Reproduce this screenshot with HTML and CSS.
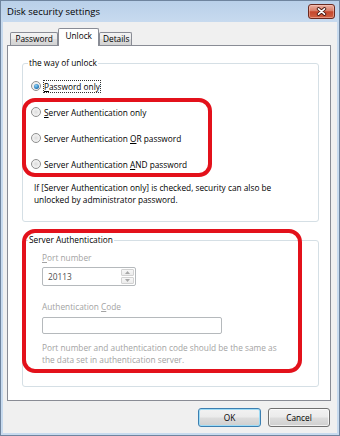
FILE: index.html
```html
<!DOCTYPE html>
<html lang="en">
<head>
<meta charset="utf-8">
<title>Disk security settings</title>
<link rel="stylesheet" href="styles.css">
</head>
<body>
<div class="window">
  <div class="titlebar">
    <span class="title">Disk security settings</span>
    <div class="close">
      <svg width="11" height="9" viewBox="0 0 11 9">
        <path d="M2.5 1.8 L8.5 7.2 M8.5 1.8 L2.5 7.2" stroke="#4a1a12" stroke-width="3.4" stroke-linecap="round" fill="none"/>
        <path d="M2.5 1.8 L8.5 7.2 M8.5 1.8 L2.5 7.2" stroke="#ffffff" stroke-width="1.6" stroke-linecap="round" fill="none"/>
      </svg>
    </div>
  </div>
  <div class="client">
    <div class="tabs">
      <div class="tab">Password</div>
      <div class="tab active">Unlock</div>
      <div class="tab last">Details</div>
    </div>
    <div class="panel">
      <fieldset class="group g1">
        <legend>the way of unlock</legend>
        <div class="g1-body">
          <div class="radios">
            <div class="radio"><span class="dot checked"></span><span class="rtext focus"><u>P</u>assword only</span></div>
            <div class="radio"><span class="dot"></span><span class="rtext"><u>S</u>erver Authentication only</span></div>
            <div class="radio"><span class="dot"></span><span class="rtext">Server Authentication <u>O</u>R password</span></div>
            <div class="radio"><span class="dot"></span><span class="rtext">Server Authentication <u>A</u>ND password</span></div>
          </div>
          <p class="hint">If [Server Authentication only] is checked, security can also be<br>unlocked by administrator password.</p>
        </div>
      </fieldset>
      <fieldset class="group g2">
        <legend>Server Authentication</legend>
        <div class="g2-body">
          <div class="flabel"><u>P</u>ort number</div>
          <div class="spin">
            <span class="spin-val">20113</span>
            <span class="spin-btns">
              <span class="sbtn"><svg width="5" height="3" viewBox="0 0 5 3"><path d="M0 3 L2.5 0 L5 3 Z" fill="#a8a8a8"/></svg></span>
              <span class="sbtn"><svg width="5" height="3" viewBox="0 0 5 3"><path d="M0 0 L2.5 3 L5 0 Z" fill="#a8a8a8"/></svg></span>
            </span>
          </div>
          <div class="flabel gap">Authentication <u>C</u>ode</div>
          <div class="textbox"></div>
          <p class="note">Port number and authentication code should be the same as<br>the data set in authentication server.</p>
        </div>
      </fieldset>
      <div class="mark m1"></div>
      <div class="mark m2"></div>
    </div>
    <div class="buttons">
      <div class="btn default">OK</div>
      <div class="btn">Cancel</div>
    </div>
  </div>
</div>
</body>
</html>
```
FILE: styles.css
```css
* { box-sizing: border-box; }
html, body { margin: 0; padding: 0; }
body {
  width: 340px;
  height: 436px;
  overflow: hidden;
  font-family: "Open Sans", "Noto Sans", sans-serif;
  font-size: 8.3px;
  line-height: 12px;
  color: #000;
  background: #c7daee;
}
.window {
  width: 340px;
  height: 436px;
  display: flex;
  flex-direction: column;
  background: linear-gradient(#b9d0e9, #c8dbef 22px, #c8dbef);
  border: 1px solid #6f849e;
}
.titlebar {
  height: 21px;
  display: flex;
  justify-content: space-between;
  align-items: flex-start;
  padding-left: 6px;
}
.title {
  font-size: 9.5px;
  line-height: 12px;
  margin-top: 5px;
  color: #000;
}
.close {
  width: 27px;
  height: 15px;
  margin: 3px 4px 0 0;
  border: 1px solid #6b2a20;
  border-radius: 3px;
  background: linear-gradient(#eab0a3, #d97e68 45%, #c5462c 52%, #d06244 100%);
  box-shadow: inset 0 0 0 1px rgba(255, 210, 200, 0.45);
  display: flex;
  align-items: center;
  justify-content: center;
}
.client {
  flex: 1;
  margin: 0 2px 2px 2px;
  background: #f0f0f0;
  display: flex;
  flex-direction: column;
  padding: 6px 0 6px 0;
}
.tabs {
  display: flex;
  align-items: flex-end;
  margin-left: 7px;
  height: 17px;
  position: relative;
  z-index: 1;
}
.tab {
  height: 13px;
  padding: 0 4.5px;
  border: 1px solid #898c95;
  border-bottom: none;
  border-radius: 2px 2px 0 0;
  background: linear-gradient(#f3f3f3, #ebebeb 50%, #dedede 50%, #d3d3d3);
  line-height: 11px;
}
.tab.active {
  height: 18px;
  margin-bottom: -1px;
  padding: 1px 6px 0 6px;
  background: #fff;
  line-height: 12px;
}
.tab.last { padding: 0 2px 0 3px; }
.panel {
  flex: 1;
  margin: 0 6px 0 4px;
  background: #fff;
  border: 1px solid #898c95;
  position: relative;
  display: flex;
  flex-direction: column;
  padding: 0 11px 0 14px;
}
.group {
  margin: 0;
  padding: 0;
  border: 1px solid #d5dfe5;
  border-radius: 3px;
  min-width: 0;
}
.group legend {
  margin-left: 5px;
  padding: 0 1px;
  line-height: 12px;
}
.g1 { margin-top: 11px; }
.g2 { margin-top: 12px; }
.g1-body { padding: 10px 8px 15px 8px; }
.radios {
  display: flex;
  flex-direction: column;
  gap: 12px;
}
.radio {
  display: flex;
  align-items: center;
  height: 14px;
}
.dot {
  width: 10px;
  height: 10px;
  border-radius: 50%;
  border: 1px solid #8e8f8f;
  background: radial-gradient(circle at 50% 50%, #dcdcdc 0, #eeeeee 50%, #fafafa 100%);
  margin-right: 2px;
  flex: none;
  display: flex;
  align-items: center;
  justify-content: center;
}
.dot.checked::after {
  content: "";
  width: 5px;
  height: 5px;
  border-radius: 50%;
  background: radial-gradient(circle at 40% 35%, #8fd2f5 0, #2a7fbf 60%, #174f86 100%);
}
.rtext {
  border: 1px solid transparent;
  padding: 0;
  line-height: 11px;
}
.rtext.focus { border: 1px dotted #333; }
u { text-underline-offset: 1px; }
.hint {
  margin: 11px 0 0 3px;
}
.g2-body { padding: 6px 8px 20px 19px; }
.flabel { color: #a3a3a3; }
.flabel.gap { margin-top: 15px; }
.spin {
  margin-top: 3px;
  width: 94px;
  height: 19px;
  border: 1px solid #b5b9bc;
  border-radius: 2px;
  background: #fff;
  display: flex;
  align-items: center;
  padding-left: 5px;
}
.spin-val { color: #4d4d4d; }
.spin-btns {
  margin-left: auto;
  display: flex;
  flex-direction: column;
  gap: 1px;
  padding: 1px 1px 1px 0;
  height: 100%;
}
.sbtn {
  width: 13px;
  flex: 1;
  border: 1px solid #d2d2d2;
  border-radius: 1px;
  background: linear-gradient(#f7f7f7, #ececec);
  display: flex;
  align-items: center;
  justify-content: center;
}
.textbox {
  margin-top: 4px;
  width: 180px;
  height: 17px;
  border: 1px solid #b5b9bc;
  border-radius: 2px;
  background: #fff;
}
.note {
  margin: 8px 0 0 0;
  color: #a3a3a3;
}
.mark {
  position: absolute;
  border: 4px solid #e3111b;
  border-radius: 13px;
}
.m1 { left: 14px; top: 52px; width: 190px; height: 79px; }
.m2 { left: 14px; top: 183px; width: 280px; height: 144px; }
.buttons {
  display: flex;
  justify-content: flex-end;
  gap: 7px;
  margin: 7px 7px 0 0;
}
.btn {
  width: 62px;
  height: 19px;
  border: 1px solid #707070;
  border-radius: 3px;
  background: linear-gradient(#f2f2f2, #ebebeb 48%, #dddddd 52%, #cfcfcf);
  box-shadow: inset 0 0 0 1px rgba(255, 255, 255, 0.7);
  display: flex;
  align-items: center;
  justify-content: center;
  line-height: 12px;
}
.btn.default {
  width: 63px;
  border-color: #3c7fb1;
  box-shadow: inset 0 0 0 1px #9fdcf6;
}
```
